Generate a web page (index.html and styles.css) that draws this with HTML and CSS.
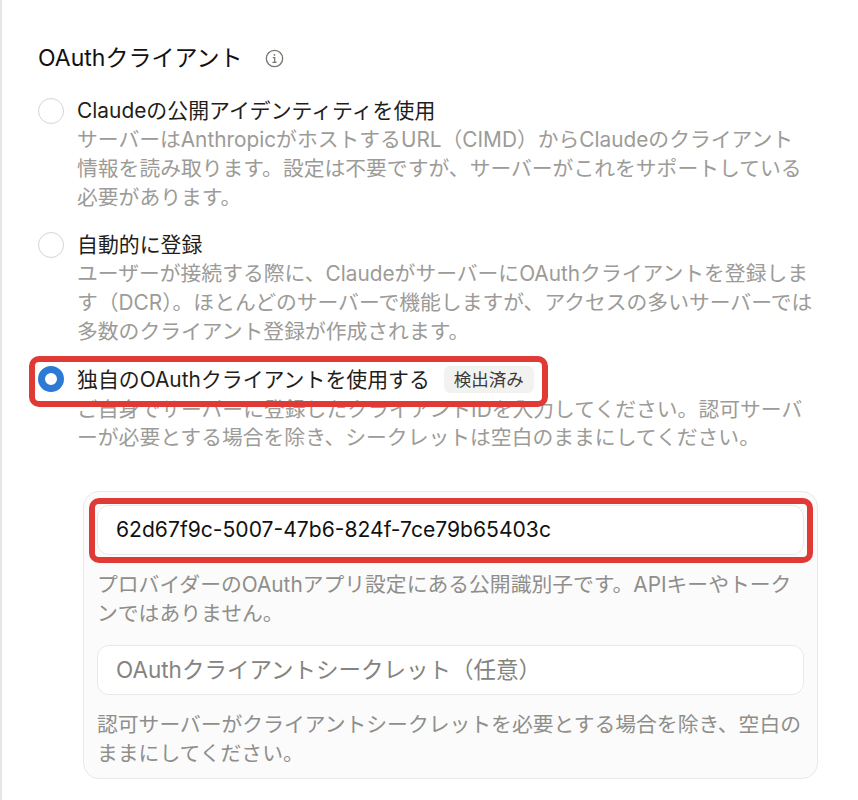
FILE: index.html
```html
<!DOCTYPE html>
<html lang="ja">
<head>
<meta charset="utf-8">
<title>OAuthクライアント</title>
<link rel="stylesheet" href="styles.css">
</head>
<body>
<main class="panel">
  <h2 class="heading">
    <span>OAuthクライアント</span>
    <svg class="info" viewBox="0 0 20 20" fill="none" stroke="#77756f" stroke-width="1.4">
      <circle cx="10" cy="10" r="8.6"/>
      <path d="M8.2 9h2v5M7.8 14h4.4" stroke-width="1.3"/>
      <circle cx="10" cy="6.2" r=".9" fill="#77756f" stroke="none"/>
    </svg>
  </h2>

  <div class="option">
    <span class="radio"></span>
    <div class="option-body">
      <div class="option-title">Claudeの公開アイデンティティを使用</div>
      <p class="option-desc">サーバーはAnthropicがホストするURL（CIMD）からClaudeのクライアント<br>情報を読み取ります。設定は不要ですが、サーバーがこれをサポートしている<br>必要があります。</p>
    </div>
  </div>

  <div class="option">
    <span class="radio"></span>
    <div class="option-body">
      <div class="option-title">自動的に登録</div>
      <p class="option-desc">ユーザーが接続する際に、ClaudeがサーバーにOAuthクライアントを登録しま<br>す（DCR）。ほとんどのサーバーで機能しますが、アクセスの多いサーバーでは<br>多数のクライアント登録が作成されます。</p>
    </div>
  </div>

  <div class="option option-selected">
    <span class="radio radio-on"></span>
    <div class="option-body">
      <div class="option-title">独自のOAuthクライアントを使用する<span class="badge">検出済み</span></div>
      <p class="option-desc option-desc-tight">ご自身でサーバーに登録したクライアントIDを入力してください。認可サーバ<br>ーが必要とする場合を除き、シークレットは空白のままにしてください。</p>
    </div>
    <span class="mark mark-option"></span>
  </div>

  <section class="fields">
    <div class="field field-marked">
      <div class="input">62d67f9c-5007-47b6-824f-7ce79b65403c</div>
      <span class="mark mark-input"></span>
    </div>
    <p class="hint">プロバイダーのOAuthアプリ設定にある公開識別子です。APIキーやトーク<br>ンではありません。</p>
    <div class="input input-empty">OAuthクライアントシークレット（任意）</div>
    <p class="hint">認可サーバーがクライアントシークレットを必要とする場合を除き、空白の<br>ままにしてください。</p>
  </section>
</main>
</body>
</html>
```
FILE: styles.css
```css
* { box-sizing: border-box; }
html, body { margin: 0; height: 800px; overflow: hidden; background: #fff; }
body {
  font-family: Inter, "Noto Sans CJK JP", sans-serif;
  color: #1f1e1b;
  font-size: 20.8px;
}
.panel {
  height: 800px;
  border-left: 2px solid #e6e6e6;
  padding: 42px 0 0 36px;
}
.heading {
  margin: 0 0 23px;
  display: flex;
  align-items: center;
  gap: 23px;
  font-size: 23px;
  line-height: 32px;
  font-weight: 400;
  color: #111;
}
.info { width: 19px; height: 19px; }
.option {
  position: relative;
  display: flex;
  gap: 13px;
  margin-bottom: 19px;
}
.option-selected { margin-bottom: 0; }
.radio {
  flex: none;
  width: 26px;
  height: 26px;
  margin-top: 1px;
  border-radius: 50%;
  border: 1.5px solid #d6d5d1;
  background: #fff;
}
.radio-on { border: 7.5px solid #2d7ad6; }
.option-title {
  display: flex;
  align-items: center;
  font-size: 20.9px;
  line-height: 28px;
  height: 28px;
  color: #1f1e1b;
}
.option-selected .option-title { padding-top: 1px; }
.option-desc {
  margin: 0;
  line-height: 29px;
  color: #9c9b97;
}
.option-desc-tight {
  padding-top: 3px;
  line-height: 28px;
}
.badge {
  margin-left: 14px;
  padding: 0 10px;
  height: 27px;
  line-height: 27px;
  font-size: 17.5px;
  border-radius: 6px;
  background: #f2f2f1;
  color: #3c3b38;
}
.fields {
  width: 735px;
  height: 288px;
  margin: 39px 0 0 45px;
  padding: 13px 13px 0 13px;
  border: 1px solid #e9e9e8;
  border-radius: 16px;
  background: #fbfbfb;
}
.field { position: relative; }
.input {
  height: 50px;
  padding: 0 18px;
  line-height: 48px;
  border: 1.5px solid #e9e9e8;
  border-radius: 12px;
  background: #fff;
  font-size: 21.1px;
  color: #111;
}
.input-empty { color: #84837f; font-size: 22.5px; }
.hint {
  margin: 15px 0 17px;
  line-height: 29px;
  font-size: 20.8px;
  color: #8f8e8a;
}
.mark {
  position: absolute;
  border: 6px solid #e03a37;
  border-radius: 10px;
  pointer-events: none;
}
.mark-option { left: -9px; top: -9px; width: 519px; height: 51px; }
.mark-input { left: -8px; top: -7px; right: -9px; bottom: -8px; }
```
